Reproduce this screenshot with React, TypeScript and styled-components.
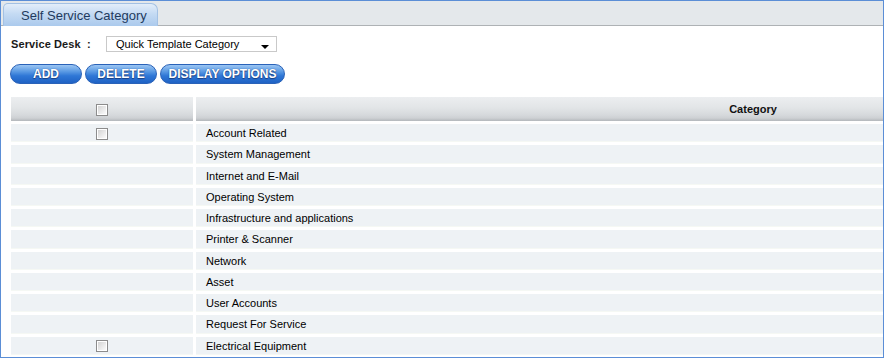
import React from "react";
import styled, { createGlobalStyle } from "styled-components";

const GlobalStyle = createGlobalStyle`
  body {
    margin: 0;
    background: #ffffff;
    font-family: "Liberation Sans", Arial, sans-serif;
  }
`;

const Frame = styled.div`
  width: 884px;
  height: 358px;
  box-sizing: border-box;
  border: 1px solid #5b8ed6;
  overflow: hidden;
  background: #ffffff;
`;

const TabBar = styled.div`
  display: flex;
  align-items: flex-end;
  height: 24px;
  padding-left: 2px;
  background: #e4e8eb;
  border-bottom: 1px solid #aeb2b5;
`;

const Tab = styled.div`
  height: 23px;
  width: 155px;
  box-sizing: border-box;
  margin-bottom: -1px;
  padding: 4px 0 0 17px;
  border: 1px solid #a3c1e4;
  border-bottom: none;
  border-radius: 5px 7px 0 0;
  background: linear-gradient(#e3eefa, #c4daf3 45%, #abcaed);
  color: #1f3b5e;
  font-size: 13px;
`;

const Content = styled.div`
  padding: 10px 0 0 9px;
`;

const FieldRow = styled.div`
  display: flex;
  align-items: center;
  height: 16px;
`;

const Label = styled.span`
  width: 95px;
  font-size: 11px;
  font-weight: bold;
  color: #1a1a1a;
  padding-left: 1px;
  letter-spacing: 0.1px;
`;

const Select = styled.div`
  display: flex;
  align-items: center;
  justify-content: space-between;
  width: 171px;
  height: 16px;
  box-sizing: border-box;
  padding: 0 7px 0 9px;
  border: 1px solid #c9c9c9;
  font-size: 11px;
  color: #000;
`;

const Caret = styled.span`
  width: 0;
  height: 0;
  margin-top: 5px;
  border-left: 4px solid transparent;
  border-right: 4px solid transparent;
  border-top: 4px solid #000;
`;

const ButtonRow = styled.div`
  display: flex;
  gap: 3px;
  margin-top: 12px;
`;

const Button = styled.button<{ $w: number }>`
  width: ${(p) => p.$w}px;
  height: 20px;
  padding: 0;
  border: 1px solid #2a62b8;
  border-radius: 10px;
  background: linear-gradient(#9cc6f3, #5c9be4 35%, #2f77d6 60%, #1f62c4);
  color: #ffffff;
  font-family: "Liberation Sans", Arial, sans-serif;
  font-size: 12px;
  font-weight: bold;
  text-shadow: 0 0 1px #1b3f80, 0 1px 1px #1b3f80;
`;

const Table = styled.table`
  margin: 10px 0 0 7px;
  border-collapse: separate;
  border-spacing: 3px;
  width: 1305px;
  table-layout: fixed;
`;

const Th = styled.th<{ $w?: number }>`
  ${(p) => (p.$w ? `width: ${p.$w}px;` : "")}
  height: 24px;
  padding: 0;
  font-size: 11px;
  font-weight: bold;
  color: #111;
  text-align: center;
  background: linear-gradient(#eceef0, #e2e5e7 45%, #d6d9dc 75%, #cdd0d3 88%, #b3b7bb);
`;

const Td = styled.td<{ $center?: boolean }>`
  height: 18.25px;
  padding: 0 0 0 ${(p) => (p.$center ? 0 : 10)}px;
  text-align: ${(p) => (p.$center ? "center" : "left")};
  vertical-align: middle;
  font-size: 11px;
  color: #000;
  background: #eef2f5;
  box-shadow: inset 0 -1px 0 #f5f8f4;
  white-space: nowrap;
`;

const Check = styled.span`
  display: inline-block;
  width: 12px;
  height: 12px;
  box-sizing: border-box;
  vertical-align: middle;
  border: 1px solid #8c8c8c;
  background: linear-gradient(135deg, #cfcfcf, #f2f2f2 70%, #ffffff);
  box-shadow: inset 0 0 0 1px #ffffff;
`;

const rows = [
  { name: "Account Related", check: true },
  { name: "System Management", check: false },
  { name: "Internet and E-Mail", check: false },
  { name: "Operating System", check: false },
  { name: "Infrastructure and applications", check: false },
  { name: "Printer & Scanner", check: false },
  { name: "Network", check: false },
  { name: "Asset", check: false },
  { name: "User Accounts", check: false },
  { name: "Request For Service", check: false },
  { name: "Electrical Equipment", check: true },
];

export default function App() {
  return (
    <>
      <GlobalStyle />
      <Frame>
        <TabBar>
          <Tab>Self Service Category</Tab>
        </TabBar>
        <Content>
          <FieldRow>
            <Label>Service Desk&nbsp; :</Label>
            <Select>
              Quick Template Category
              <Caret />
            </Select>
          </FieldRow>
          <ButtonRow>
            <Button $w={72}>ADD</Button>
            <Button $w={72}>DELETE</Button>
            <Button $w={125}>DISPLAY OPTIONS</Button>
          </ButtonRow>
        </Content>
        <Table>
          <thead>
            <tr>
              <Th $w={182}>
                <Check />
              </Th>
              <Th>Category</Th>
            </tr>
          </thead>
          <tbody>
            {rows.map((r) => (
              <tr key={r.name}>
                <Td $center>{r.check && <Check />}</Td>
                <Td>{r.name}</Td>
              </tr>
            ))}
          </tbody>
        </Table>
      </Frame>
    </>
  );
}
